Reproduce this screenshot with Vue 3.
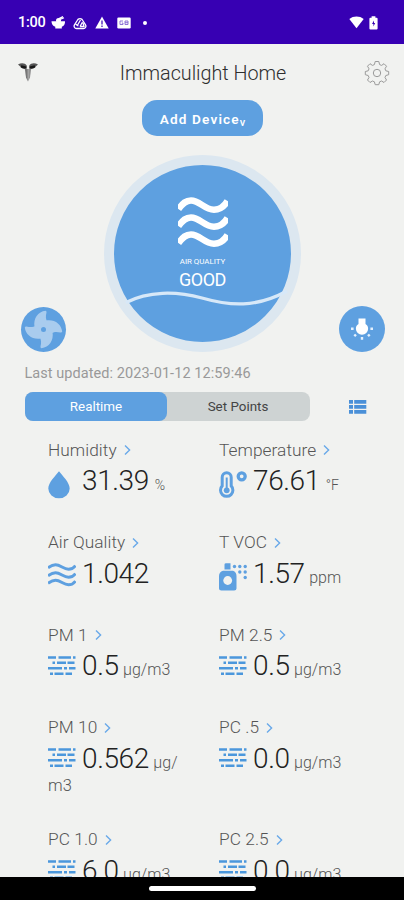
<script setup>
const metrics = [
  { label: 'Humidity', value: '31.39', unit: '%', icon: 'drop', small: true },
  { label: 'Temperature', value: '76.61', unit: '°F', icon: 'temp', small: true },
  { label: 'Air Quality', value: '1.042', unit: '', icon: 'waves' },
  { label: 'T VOC', value: '1.57', unit: 'ppm', icon: 'spray' },
  { label: 'PM 1', value: '0.5', unit: 'µg/m3', icon: 'dust' },
  { label: 'PM 2.5', value: '0.5', unit: 'µg/m3', icon: 'dust' },
  { label: 'PM 10', value: '0.562', unit: 'µg/', rest: 'm3', icon: 'dust' },
  { label: 'PC .5', value: '0.0', unit: 'µg/m3', icon: 'dust' },
  { label: 'PC 1.0', value: '6.0', unit: 'µg/m3', icon: 'dust' },
  { label: 'PC 2.5', value: '0.0', unit: 'µg/m3', icon: 'dust' },
]
</script>

<template>
  <div class="phone">
    <div class="status">
      <div class="status-left">
        <span class="clock">1:00</span>
        <svg class="s-bowl" width="15" height="14" viewBox="0 0 15 14">
          <path d="M.5 5.200h13.500c.3 2.600-1 4.600-3.200 5.600v1.600H4.300V10.800C1.900 9.800.400 7.800.500 5.200z" fill="#fff" />
          <path d="M9 3.500l4-1.700M8 2.600l4-2" fill="none" stroke="#fff" stroke-width="1.200" />
          <circle cx="7.500" cy="4.600" r="2.500" fill="#fff" />
        </svg>
        <svg class="s-tri" width="14" height="14" viewBox="0 0 14 14" fill="none" stroke="#fff" stroke-width="1.300">
          <path d="M4.200 4.500a3 3 0 0 1 5.600 0l2.700 4.300a2.400 2.400 0 0 1-2 3.700h-7a2.400 2.400 0 0 1-2-3.700z" />
          <path d="M4 10l3.500-6M7 10.500L9.500 6M2.500 8l3 2M10 7l1 3.500H7" />
        </svg>
        <svg class="s-warn" width="14" height="13" viewBox="0 0 14 13">
          <path d="M7 .5L13.700 12.500H.3z" fill="#fff" />
          <path d="M7 4.600v3.800M7 9.500v1.400" stroke="#3700b3" stroke-width="1.200" />
        </svg>
        <svg class="s-news" width="14" height="12" viewBox="0 0 14 12">
          <rect x=".3" y=".5" width="13.400" height="11" rx="1.200" fill="#fff" />
          <path d="M6 4H3v3.500h3V6H4.800M8 4v3.500h3V4zM8 5.700h3" fill="none" stroke="#8567d3" stroke-width=".9" />
        </svg>
        <span class="dot"></span>
      </div>
      <div class="status-right">
        <svg width="15" height="13" viewBox="0 0 15 13">
          <path d="M.3 3C4.400-.3 10.600-.3 14.700 3L7.500 12.300z" fill="#fff" />
        </svg>
        <svg width="9" height="14" viewBox="0 0 9 14">
          <path d="M2.600.3h3.800v1.400h1.200q1 0 1 1v9.800q0 1-1 1H1.400q-1 0-1-1V2.700q0-1 1-1h1.200z" fill="#fff" />
          <path d="M5 4.500L3 8h1.400v2.500L6.200 7H5z" fill="#3700b3" />
        </svg>
      </div>
    </div>

    <div class="header">
      <svg class="logo" width="20" height="19" viewBox="0 0 20 19">
        <path d="M0 1.500C3-.3 7-.2 8.700 2.500L9 5.500C6.500 6.400 4 5.800 2.800 4z" fill="#555" />
        <path d="M20 1.500C17-.3 13-.2 11.300 2.500L11 5.500c2.500.9 5 .3 6.200-1.500z" fill="#555" />
        <path d="M3 3.300l5 1.400M17 3.300l-5 1.400" stroke="#171717" stroke-width="2.400" />
        <path d="M6.800 5.700L9.800 6v12.500L8 14.500z" fill="#777" />
        <path d="M13.200 5.700L10.200 6v12.500l1.800-4z" fill="#929292" />
      </svg>
      <h1>Immaculight Home</h1>
      <svg class="gear" width="26" height="26" viewBox="-13 -13 26 26" fill="none" stroke="#9a9a9a" stroke-width="1">
        <path d="M-1.800-11.500H1.800L2.600-8.400 4.600-7.600 7-9.300 9.500-6.800 8-4.200 8.800-2.200 11.700-1.500V1.700L8.800 2.500 8 4.500 9.500 7 7 9.500 4.600 8 2.600 8.800 1.800 11.700H-1.800L-2.600 8.800-4.600 8-7 9.500-9.500 7-8 4.500-8.800 2.500-11.700 1.700V-1.500L-8.800-2.200-8-4.200-9.500-6.800-7-9.300-4.600-7.600-2.600-8.400z" stroke-linejoin="round" />
        <circle r="3.700" />
      </svg>
    </div>

    <button class="add">Add Device<span>v</span></button>

    <div class="hero">
      <div class="round fan">
        <svg width="45" height="45" viewBox="-22.500 -22.500 45 45">
          <g fill="#a9ccee">
            <path v-for="n in 4" :key="n" :transform="`rotate(${(n - 1) * 90})`" d="M-9-2.500C-10.500-11-5.500-17.800 2-18.700Q3.200-18.500 3-17C2-13 2.200-10.500 4-7L3 0H-3z" />
          </g>
          <circle r="2.500" fill="#5ea0e0" />
        </svg>
      </div>
      <div class="dial">
        <svg class="dial-waves" width="50" height="50" viewBox="0 0 50 50" fill="none" stroke="#fff" stroke-width="6.500">
          <path v-for="y in [0, 17, 34]" :key="y" :transform="`translate(0 ${y})`" d="M.5 12C5 6 8 3.500 13 3.500C22 3.500 26 12.700 36 12.700C42 12.700 46 10 49.500 4" />
        </svg>
        <div class="dial-label">AIR QUALITY</div>
        <div class="dial-value">GOOD</div>
        <svg class="dial-line" width="177" height="20" viewBox="0 0 177 20" fill="none" stroke="#d7e8f8" stroke-width="3.300">
          <path d="M12 12.500C34 1 62 1 88 8C116 16 142 18 173 1" />
        </svg>
      </div>
      <div class="round bulb">
        <svg width="24" height="24" viewBox="0 0 24 24" fill="#fff">
          <path d="M8.500 1.500h7v5.500c1.900 1.200 2.600 2.800 2.600 4.700a6.100 6.100 0 0 1-12.200 0C5.900 9.800 6.600 8.200 8.500 7z" />
          <path d="M1 11.700h2.600M20.400 11.700h2.600M4.300 19.200l1.700-1.700M19.700 19.200l-1.700-1.700M12 20v2.700" stroke="#e4f1fd" stroke-width="2.400" />
        </svg>
      </div>
    </div>

    <div class="updated">Last updated: 2023-01-12 12:59:46</div>

    <div class="toolbar">
      <div class="tabs">
        <div class="tab active">Realtime</div>
        <div class="tab">Set Points</div>
      </div>
      <svg width="18" height="14" viewBox="0 0 18 14" fill="#4a90d8">
        <path d="M0 0h4v3.800H0zM5.200 0H17.300v3.800H5.200zM0 5h4v3.800H0zM5.200 5H17.300v3.800H5.200zM0 10h4v3.800H0zM5.200 10H17.300v3.800H5.200z" />
      </svg>
    </div>

    <div class="metrics">
      <div v-for="m in metrics" :key="m.label" class="metric">
        <div class="label">
          <span>{{ m.label }}</span>
          <svg width="7" height="12" viewBox="0 0 7 12" fill="none" stroke="#69a9e9" stroke-width="1.400"><path d="M1 1.500L5.600 6 1 10.500" /></svg>
        </div>
        <div class="reading">
          <span class="icon">
            <svg v-if="m.icon === 'drop'" width="22" height="28" viewBox="0 0 22 28" fill="#5ea0e0">
              <path d="M11 .3C14.500 5 21.700 11.500 21.700 17.500A10.700 9.800 0 0 1 .3 17.500C.3 11.500 7.500 5 11 .3z" />
            </svg>
            <svg v-else-if="m.icon === 'temp'" width="28" height="28" viewBox="0 0 28 28" fill="none" stroke="#5ea0e0">
              <path d="M3.200 6.200a4.500 4.500 0 0 1 9 0v8.700a6.200 6.200 0 1 1-9 0z" stroke-width="3" />
              <path d="M7.700 6.500v12" stroke-width="2" />
              <circle cx="7.700" cy="19.300" r="2.900" fill="#5ea0e0" stroke="none" />
              <circle cx="22.700" cy="5.300" r="3.500" stroke-width="3.300" />
            </svg>
            <svg v-else-if="m.icon === 'waves'" width="28" height="24" viewBox="0 0 28 24" fill="none" stroke="#5ea0e0" stroke-width="2.900">
              <path v-for="y in [0, 8, 15.5]" :key="y" :transform="`translate(0 ${y})`" d="M0 4.800C3 2.500 5 1.700 7.500 1.700C12.500 1.700 15.500 6.300 20.500 6.300C24 6.300 26 4.500 27.500 2.500" />
            </svg>
            <svg v-else-if="m.icon === 'spray'" width="29" height="28" viewBox="0 0 29 28" fill="#5ea0e0">
              <path d="M5.500 1.500Q5.500.3 7 .3H11.500V6.500H5.500zM4 7.800H14Q17.500 9 17.500 13V25.500Q17.500 27.500 15.200 27.500H2.300Q0 27.500 0 25.500V13Q0 9 4 7.800z" />
              <circle cx="8.700" cy="17.500" r="4.400" fill="#f1f2f0" />
              <g><circle v-for="p in [[15.500,3.500],[20.800,3.500],[26.200,3.500],[20.800,9],[26.200,9],[26.200,14.500]]" :key="p.join()" :cx="p[0]" :cy="p[1]" r="1.700" /></g>
            </svg>
            <svg v-else width="28" height="20" viewBox="0 0 28 20" fill="none" stroke="#4b97dc" stroke-width="2.600">
              <path d="M0 1.500h8M10.500 1.500h12.500M25 1.500h2.500M4.500 6.800h2.500M9 6.800h9M19.500 6.800h7M0 12.300h14M16 12.300h3M21 12.300h6.500M2 17.700h3M6.500 17.700h9M17.500 17.700h6.500" />
            </svg>
          </span>
          <span class="value">{{ m.value }}</span>
          <span v-if="m.unit" class="unit" :class="{ small: m.small }">{{ m.unit }}</span>
        </div>
        <div v-if="m.rest" class="rest">{{ m.rest }}</div>
      </div>
    </div>

    <div class="navbar"><span></span></div>
  </div>
</template>

<style>
body { margin: 0; overflow: hidden; background: #f1f2f0; }
</style>

<style scoped>
* { box-sizing: border-box; }
.phone { width: 404px; height: 900px; display: flex; flex-direction: column; overflow: hidden; background: #f1f2f0; font-family: Roboto, "Liberation Sans", sans-serif; color: #333; }
svg { display: block; flex: none; }
.status { flex: none; height: 44px; background: #3700b3; display: flex; justify-content: space-between; padding: 1px 26px 0 18px; }
.status-left, .status-right { display: flex; align-items: center; }
.clock { color: #fff; font-size: 14.5px; font-weight: 500; width: 33px; white-space: nowrap; letter-spacing: -.3px; }
.s-tri { margin-left: 7px; }
.s-warn { margin-left: 8px; }
.s-news { margin-left: 8px; }
.dot { width: 4px; height: 4px; border-radius: 50%; background: #fff; margin-left: 12px; }
.status-right { gap: 5px; }
.header { flex: none; height: 56px; display: flex; align-items: center; padding: 1px 14px 0 18px; }
h1 { margin: 0; flex: 1; text-align: center; font-size: 19.8px; line-height: 24px; font-weight: 350; color: #2e2e2e; padding: 2px 0 0 4px; letter-spacing: -.02px; white-space: nowrap; }
.logo { margin-top: -1px; }
.add { flex: none; align-self: center; width: 121px; height: 36px; margin: 0 0 0 1px; padding: 2px 0 0; border: 0; border-radius: 15px; background: #5ea0e0; color: #fff; font-family: inherit; font-weight: 600; font-size: 13.6px; line-height: 20px; letter-spacing: 1.15px; white-space: nowrap; }
.add span { font-size: 11px; font-weight: 500; letter-spacing: 0; display: inline-block; line-height: 10px; vertical-align: -2px; }
.hero { flex: none; margin-top: 19px; height: 197px; padding: 0 19px 0 21px; display: flex; justify-content: space-between; align-items: flex-end; }
.round { width: 45px; height: 45px; border-radius: 50%; background: #5ea0e0; display: flex; align-items: center; justify-content: center; }
.bulb { width: 46px; height: 46px; }
.dial { width: 197px; height: 197px; border-radius: 50%; border: 10px solid #dce7f0; background: #5ea0e0; display: flex; flex-direction: column; align-items: center; color: #fff; }
.dial-waves { margin-top: 32px; }
.dial-label { font-size: 7.9px; line-height: 10px; margin-top: 10px; white-space: nowrap; }
.dial-value { font-size: 18px; line-height: 22px; margin-top: 2px; letter-spacing: -.5px; }
.dial-line { margin-top: -1px; }
.updated { flex: none; padding-left: 24.5px; margin-top: 12px; height: 20px; line-height: 20px; font-size: 14.5px; color: #999; letter-spacing: .06px; white-space: nowrap; }
.toolbar { flex: none; margin: 8px 37px 0 25px; height: 29px; display: flex; justify-content: space-between; align-items: center; }
.tabs { width: 285px; height: 29px; border-radius: 8px; background: #ced3d3; display: flex; }
.tab { width: 142px; line-height: 30px; text-align: center; font-size: 13.4px; border-radius: 8px; color: #444; }
.active { background: #5ea0e0; color: #fff; font-weight: 450; }
.metrics { flex: 1; min-height: 0; overflow: hidden; padding: 18px 0 0 48px; display: grid; grid-template-columns: 171px 150px; grid-auto-rows: max-content; row-gap: 32px; align-content: start; }
.metric { min-height: 60.500px; }
.label { display: flex; align-items: center; gap: 7px; height: 22px; font-size: 17.3px; line-height: 21px; font-weight: 300; color: #555; letter-spacing: .06px; white-space: nowrap; }
.reading { display: flex; align-items: baseline; height: 38px; line-height: 39px; white-space: nowrap; }
.icon { width: 34px; align-self: flex-start; padding-top: 9.500px; }
.value { font-size: 28px; font-weight: 300; color: #222; letter-spacing: -.4px; }
.unit { margin-left: 4.500px; font-size: 16px; font-weight: 300; color: #555; }
.small { margin-left: 6px; font-size: 14px; }
.rest { height: 20px; line-height: 17px; font-size: 16.5px; font-weight: 300; color: #555; }
.navbar { flex: none; height: 23px; background: #000; display: flex; justify-content: center; padding: 9px 0 0 1px; }
.navbar span { width: 107px; height: 5px; border-radius: 3px; background: #fff; }
</style>
